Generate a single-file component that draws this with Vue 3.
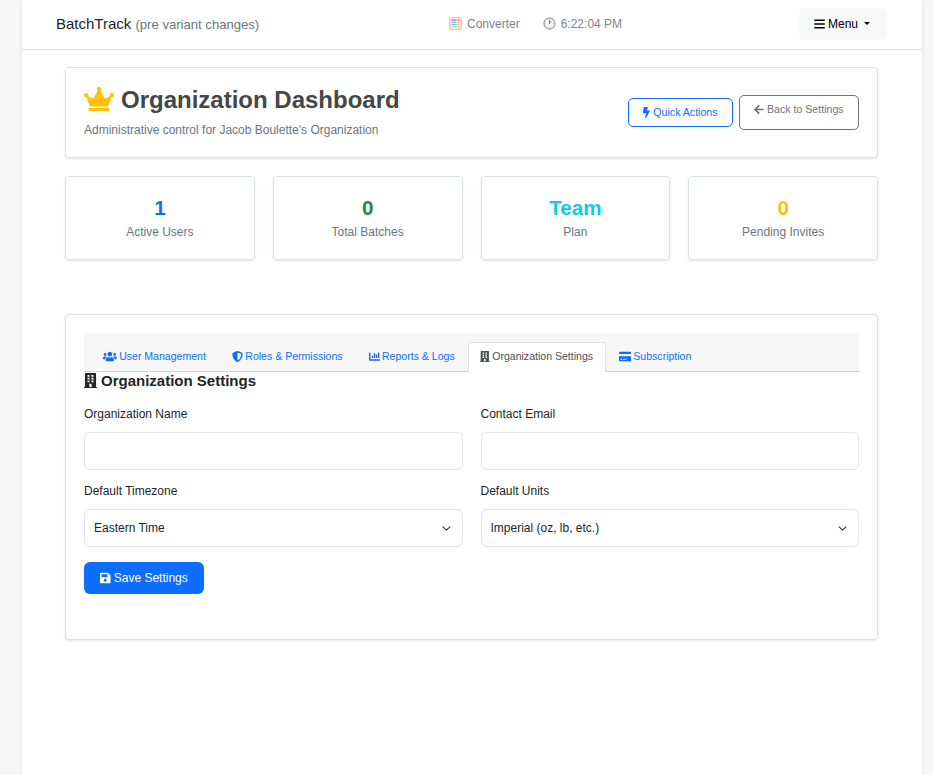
<script setup>
const icons = {
  crown: { w: 640, d: 'M528 448H112c-8.8 0-16 7.2-16 16v32c0 8.8 7.2 16 16 16h416c8.8 0 16-7.2 16-16v-32c0-8.8-7.2-16-16-16zm64-320c-26.5 0-48 21.5-48 48 0 7.1 1.6 13.7 4.4 19.8L476 239.2c-15.4 9.2-35.3 4-44.2-11.6L350.3 85C361 76.2 368 63 368 48c0-26.5-21.5-48-48-48s-48 21.5-48 48c0 15 7 28.2 17.7 37l-81.5 142.6c-8.9 15.6-28.9 20.8-44.2 11.6l-72.3-43.4c2.7-6 4.4-12.7 4.4-19.8 0-26.5-21.5-48-48-48S0 149.5 0 176s21.5 48 48 48c2.6 0 5.2-.4 7.7-.8L128 416h384l72.3-192.8c2.5.4 5.1.8 7.7.8 26.5 0 48-21.5 48-48s-21.5-48-48-48z' },
  bolt: { w: 320, d: 'M296 160H180.6l42.6-129.8C227.2 15 215.7 0 200 0H56C44 0 33.8 8.9 32.2 20.8l-32 240C-1.7 275.2 9.5 288 24 288h118.7L96.6 482.5c-3.6 15.2 8 29.5 23.3 29.5 8.4 0 16.4-4.4 20.8-12l176-304c9.3-15.9-2.2-36-20.7-36z' },
  arrow: { w: 448, d: 'M257.5 445.1l-22.2 22.2c-9.4 9.4-24.6 9.4-33.9 0L7 273c-9.4-9.4-9.4-24.6 0-33.9L201.4 44.7c9.4-9.4 24.6-9.4 33.9 0l22.2 22.2c9.5 9.5 9.3 25-.4 34.3L136.6 216H424c13.3 0 24 10.7 24 24v32c0 13.3-10.7 24-24 24H136.6l120.5 114.8c9.8 9.3 10 24.8.4 34.3z' },
  users: { w: 640, d: 'M96 224c35.3 0 64-28.7 64-64s-28.7-64-64-64-64 28.7-64 64 28.7 64 64 64zm448 0c35.3 0 64-28.7 64-64s-28.7-64-64-64-64 28.7-64 64 28.7 64 64 64zm32 32h-64c-17.6 0-33.5 7.1-45.1 18.6 40.3 22.1 68.9 62 75.1 109.4h66c17.7 0 32-14.3 32-32v-32c0-35.3-28.7-64-64-64zm-256 0c61.9 0 112-50.1 112-112S381.9 32 320 32 208 82.1 208 144s50.1 112 112 112zm76.8 32h-8.3c-20.8 10-43.9 16-68.5 16s-47.6-6-68.5-16h-8.3C179.6 288 128 339.6 128 403.2V432c0 26.5 21.5 48 48 48h288c26.5 0 48-21.5 48-48v-28.8c0-63.6-51.6-115.2-115.2-115.2zm-223.7-13.4C161.5 263.1 145.6 256 128 256H64c-35.3 0-64 28.7-64 64v32c0 17.7 14.3 32 32 32h65.9c6.3-47.4 34.9-87.3 75.2-109.4z' },
  shield: { w: 512, d: 'M466.5 83.7l-192-80a48.15 48.15 0 0 0-36.9 0l-192 80C27.7 91.1 16 108.6 16 128c0 198.5 114.5 335.7 221.5 380.3 11.8 4.9 25.1 4.9 36.9 0C360.1 472.6 496 349.3 496 128c0-19.4-11.7-36.9-29.5-44.3zM256.1 446.3l-.1-381 175.9 73.3c-3.3 151.4-82.1 261.1-175.8 307.7z' },
  chart: { w: 512, d: 'M332.8 320h38.4c6.4 0 12.8-6.4 12.8-12.8V172.8c0-6.4-6.4-12.8-12.8-12.8h-38.4c-6.4 0-12.8 6.4-12.8 12.8v134.4c0 6.4 6.4 12.8 12.8 12.8zm96 0h38.4c6.4 0 12.8-6.4 12.8-12.8V76.8c0-6.4-6.4-12.8-12.8-12.8h-38.4c-6.4 0-12.8 6.4-12.8 12.8v230.4c0 6.4 6.4 12.8 12.8 12.8zm-288 0h38.4c6.4 0 12.8-6.4 12.8-12.8v-70.4c0-6.4-6.4-12.8-12.8-12.8h-38.4c-6.4 0-12.8 6.4-12.8 12.8v70.4c0 6.4 6.4 12.8 12.8 12.8zm96 0h38.4c6.4 0 12.8-6.4 12.8-12.8V108.8c0-6.4-6.4-12.8-12.8-12.8h-38.4c-6.4 0-12.8 6.4-12.8 12.8v198.4c0 6.4 6.4 12.8 12.8 12.8zM496 384H64V80c0-8.84-7.16-16-16-16H16C7.16 64 0 71.16 0 80v336c0 17.67 14.33 32 32 32h464c8.84 0 16-7.16 16-16v-32c0-8.84-7.16-16-16-16z' },
  building: { w: 448, d: 'M436 480h-20V24c0-13.3-10.7-24-24-24H56C42.7 0 32 10.7 32 24v456H12c-6.6 0-12 5.4-12 12v20h448v-20c0-6.6-5.4-12-12-12zM120 64h72v64h-72zM256 64h72v64h-72zM120 160h72v64h-72zM256 160h72v64h-72zM120 256h72v64h-72zM256 256h72v64h-72zM184 372h80v108h-80z' },
  credit: { w: 576, d: 'M0 432c0 26.5 21.5 48 48 48h480c26.5 0 48-21.5 48-48V240H0v192zm192-58c0-6.6 5.4-12 12-12h136c6.6 0 12 5.4 12 12v16c0 6.6-5.4 12-12 12H204c-6.6 0-12-5.4-12-12v-16zm-128 0c0-6.6 5.4-12 12-12h72c6.6 0 12 5.4 12 12v16c0 6.6-5.4 12-12 12H76c-6.6 0-12-5.4-12-12v-16zM576 80v55H0V80c0-26.5 21.5-48 48-48h480c26.5 0 48 21.5 48 48z' },
  save: { w: 448, d: 'M433.941 129.941l-83.882-83.882A48 48 0 0 0 316.118 32H48C21.49 32 0 53.49 0 80v352c0 26.51 21.49 48 48 48h352c26.51 0 48-21.49 48-48V163.882a48 48 0 0 0-14.059-33.941zM224 416c-35.346 0-64-28.654-64-64s28.654-64 64-64 64 28.654 64 64-28.654 64-64 64zm96-304.52V212c0 6.627-5.373 12-12 12H76c-6.627 0-12-5.373-12-12V108c0-6.627 5.373-12 12-12h228.52c3.183 0 6.235 1.264 8.485 3.515l3.48 3.48A11.996 11.996 0 0 1 320 111.48z' },
  bars: { w: 448, d: 'M0 64h448v64H0zM0 224h448v64H0zM0 384h448v64H0z' },
}
const box = (name) => `0 0 ${icons[name].w} 512`

const stats = [
  { value: '1', label: 'Active Users', tone: 'blue' },
  { value: '0', label: 'Total Batches', tone: 'green' },
  { value: 'Team', label: 'Plan', tone: 'cyan' },
  { value: '0', label: 'Pending Invites', tone: 'amber' },
]
const tabs = [
  { key: 'users', label: 'User Management' },
  { key: 'shield', label: 'Roles & Permissions' },
  { key: 'chart', label: 'Reports & Logs' },
  { key: 'building', label: 'Organization Settings', active: true },
  { key: 'credit', label: 'Subscription' },
]
const fields = [
  { label: 'Organization Name' },
  { label: 'Contact Email' },
  { label: 'Default Timezone', value: 'Eastern Time' },
  { label: 'Default Units', value: 'Imperial (oz, lb, etc.)' },
]
</script>

<template>
  <div class="page">
    <header class="navbar">
      <div class="brand">BatchTrack <small>(pre variant changes)</small></div>
      <div class="tools">
        <span class="tool converter">
          <svg class="emoji" viewBox="0 0 13 13">
            <rect x="0.7" y="0.7" width="11.6" height="11.6" rx="1.8" fill="#fff5ee" stroke="#ffb08d" stroke-width="1.1" />
            <path d="M2.3 3h5.2" stroke="#d44bd0" stroke-width="1.2" />
            <path d="M8.3 3h2.5" stroke="#ff4fa0" stroke-width="1.2" />
            <path d="M2.3 5.2h5.2" stroke="#53bdf5" stroke-width="1.2" />
            <path d="M8.3 5.2h2.5" stroke="#f5a0d0" stroke-width="1.2" />
            <path d="M2.3 7.5h5.2" stroke="#55e0d0" stroke-width="1.2" />
            <path d="M8.3 7.5h2.5" stroke="#ffc04f" stroke-width="1.2" />
            <path d="M2.3 9.9h5.2" stroke="#8beabc" stroke-width="1.2" />
            <path d="M8.3 9.9h2.5" stroke="#ffd54f" stroke-width="1.2" />
          </svg>
          Converter
        </span>
        <span class="tool clock">
          <svg class="emoji" viewBox="0 0 13 13">
            <circle cx="6.5" cy="6.5" r="5.5" fill="#f4f2f4" stroke="#a3a3a5" stroke-width="1.3" />
            <path d="M6.5 2.2v.8M6.5 10v.8M2.2 6.5H3M10 6.5h.8" stroke="#bbb" stroke-width=".7" />
            <path d="M6.5 7V3.2" stroke="#777" stroke-width="1" />
            <path d="M6.5 6.7L8.2 4.2" stroke="#dd7585" stroke-width=".9" />
          </svg>
          6:22:04 PM
        </span>
      </div>
      <button class="menu">
        <svg class="ico" :viewBox="box('bars')"><path :d="icons.bars.d" /></svg>
        <span>Menu</span><i class="caret"></i>
      </button>
    </header>

    <main class="content">
      <section class="card hero">
        <div>
          <h1><svg class="crown" :viewBox="box('crown')"><path :d="icons.crown.d" /></svg><span>Organization Dashboard</span></h1>
          <p>Administrative control for Jacob Boulette's Organization</p>
        </div>
        <div class="actions">
          <button class="btn quick"><svg class="ico" :viewBox="box('bolt')"><path :d="icons.bolt.d" /></svg><span>Quick Actions</span></button>
          <button class="btn back"><svg class="ico" :viewBox="box('arrow')"><path :d="icons.arrow.d" /></svg><span>Back to Settings</span></button>
        </div>
      </section>

      <section class="stats">
        <div v-for="s in stats" :key="s.label" class="card stat">
          <strong :class="s.tone">{{ s.value }}</strong>
          <span>{{ s.label }}</span>
        </div>
      </section>

      <section class="card panel">
        <nav class="tabs">
          <a v-for="t in tabs" :key="t.key" class="tab" :class="{ active: t.active }">
            <svg class="ico" :viewBox="box(t.key)"><path fill-rule="evenodd" :d="icons[t.key].d" /></svg><span>{{ t.label }}</span>
          </a>
        </nav>
        <h2><svg class="ico" :viewBox="box('building')"><path fill-rule="evenodd" :d="icons.building.d" /></svg><span>Organization Settings</span></h2>
        <div class="form">
          <div v-for="f in fields" :key="f.label" class="field">
            <label>{{ f.label }}</label>
            <div class="control">
              <template v-if="f.value">
                <span>{{ f.value }}</span>
                <svg class="chevron" viewBox="0 0 16 16"><path d="m2 5 6 6 6-6" /></svg>
              </template>
            </div>
          </div>
        </div>
        <button class="save"><svg class="ico" :viewBox="box('save')"><path :d="icons.save.d" /></svg><span>Save Settings</span></button>
      </section>
    </main>
  </div>
</template>

<style>
body {
  margin: 0;
  background: #f7f7f7;
  overflow: hidden;
}
</style>

<style scoped>
* {
  box-sizing: border-box;
}
.page {
  width: 900px;
  height: 775px;
  margin-left: 22px;
  background: #fff;
  box-shadow: 0 0 4px rgba(0, 0, 0, 0.1);
  font-family: "Liberation Sans", Arial, sans-serif;
  font-size: 12px;
  color: #212529;
}
button {
  font: inherit;
  cursor: pointer;
}
svg {
  flex: none;
  display: block;
}
.ico {
  fill: currentColor;
  height: 11px;
}
.navbar {
  height: 50px;
  display: grid;
  grid-template-columns: 393px 1fr auto;
  align-items: center;
  padding: 0 35px 2px 34px;
  border-bottom: 1px solid #e2e3e4;
  box-shadow: 0 1px 2px rgba(0, 0, 0, 0.05);
}
.brand {
  font-size: 15px;
  white-space: nowrap;
}
.brand small {
  font-size: 13.1px;
  color: #6c757d;
}
.tools {
  display: flex;
  gap: 23px;
  color: #7f8387;
}
.tool {
  display: flex;
  align-items: center;
  gap: 5px;
}
.emoji {
  width: 13px;
  height: 13px;
}
.menu {
  width: 88px;
  height: 32px;
  display: flex;
  align-items: center;
  padding: 0 0 0 15px;
  gap: 3px;
  border: 0;
  border-radius: 6px;
  background: #f8f9fa;
  color: #000;
}
.menu .ico {
  width: 11px;
  height: 12px;
}
.caret {
  margin-left: 3px;
  border: 3px solid transparent;
  border-top-color: #000;
  border-bottom: 0;
}
.content {
  padding: 17px 44px 0 43px;
}
.card {
  border: 1px solid #dee2e6;
  border-radius: 4px;
  background: #fff;
  box-shadow: 0 1px 3px rgba(0, 0, 0, 0.1);
}
.hero {
  height: 91px;
  display: flex;
  justify-content: space-between;
  padding: 18px 18px 0;
}
h1 {
  display: flex;
  align-items: center;
  gap: 7px;
  height: 28px;
  margin: 0;
  font-size: 24px;
  font-weight: 700;
  color: #444648;
}
.crown {
  width: 30px;
  height: 24px;
  margin-top: -3px;
  fill: #ffc107;
}
.hero p {
  margin: 8px 0 0;
  line-height: 16px;
  color: #6c757d;
}
.actions {
  display: flex;
  gap: 6px;
  padding-top: 9px;
}
.btn {
  display: flex;
  align-items: center;
  justify-content: center;
  gap: 3px;
  padding: 0;
  border: 1px solid;
  border-radius: 5px;
  background: #fff;
  font-size: 10.6px;
}
.quick {
  width: 105px;
  height: 29px;
  margin-top: 3px;
  padding-bottom: 1px;
  color: #0d6efd;
}
.back {
  width: 120px;
  height: 35px;
  padding-bottom: 7px;
  color: #6c757d;
}
.stats {
  display: grid;
  grid-template-columns: repeat(4, 1fr);
  gap: 18px;
  margin-top: 18px;
}
.stat {
  height: 84px;
  display: flex;
  flex-direction: column;
  align-items: center;
  padding-top: 18px;
  color: #6c757d;
}
.stat strong {
  font-size: 20.6px;
  line-height: 26px;
}
.stat span {
  line-height: 18px;
  margin-top: 2px;
}
.blue { color: #0d6efd; }
.green { color: #198754; }
.cyan { color: #0dcaf0; }
.amber { color: #ffc107; }
.panel {
  height: 326px;
  margin-top: 54px;
  padding: 18px;
}
.tabs {
  height: 39px;
  display: flex;
  align-items: flex-end;
  padding-left: 6px;
  background: #f7f7f7;
  border-bottom: 1px solid #d4d5d6;
}
.tab {
  height: 30px;
  display: flex;
  align-items: center;
  gap: 2.4px;
  padding: 0 12px 3px;
  margin-bottom: -1px;
  border: 1px solid transparent;
  border-bottom: 0;
  border-radius: 4px 4px 0 0;
  font-size: 10.55px;
  color: #0d6efd;
  white-space: nowrap;
}
.tab.active {
  padding: 0 11.5px 3px;
  background: #fff;
  border-color: #dee2e6;
  color: #495057;
}
h2 {
  display: flex;
  align-items: center;
  gap: 4px;
  height: 18px;
  margin: -1px 0 0;
  font-size: 15px;
  font-weight: 700;
}
h2 .ico {
  width: 13px;
  height: 15px;
}
.form {
  display: grid;
  grid-template-columns: 1fr 1fr;
  gap: 12px 18px;
  margin-top: 16px;
}
.field label {
  display: block;
  line-height: 18px;
}
.control {
  height: 38px;
  display: flex;
  align-items: center;
  justify-content: space-between;
  margin-top: 9px;
  padding: 0 11px 0 9px;
  border: 1px solid #e3e5e8;
  border-radius: 6px;
}
.chevron {
  width: 9px;
  height: 9px;
  fill: none;
  stroke: #343a40;
  stroke-width: 2;
  stroke-linecap: round;
  stroke-linejoin: round;
}
.save {
  width: 120px;
  height: 32px;
  display: flex;
  align-items: center;
  justify-content: center;
  gap: 3px;
  margin-top: 15px;
  padding: 0;
  border: 0;
  border-radius: 6px;
  background: #0d6efd;
  color: #fff;
}
.save .ico {
  height: 12px;
}
</style>
